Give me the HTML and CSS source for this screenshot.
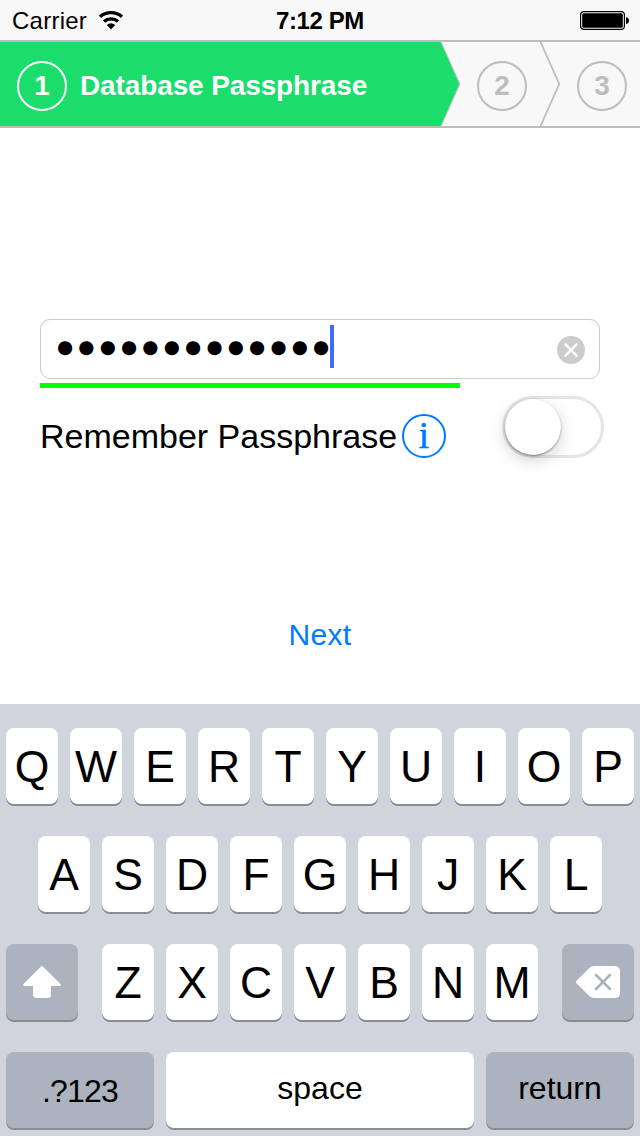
FILE: index.html
```html
<!DOCTYPE html>
<html lang="en">
<head>
<meta charset="utf-8">
<title>Database Passphrase</title>
<link rel="stylesheet" href="styles.css">
</head>
<body>
<div class="screen">
  <header class="status">
    <div class="carrier"><span>Carrier</span>
      <svg class="wifi" width="26" height="20" viewBox="0 0 26 20"><g fill="none" stroke="#000" stroke-width="3.4"><path d="M2 6.8C8 1.2 18 1.2 24 6.8"/><path d="M6 11.6C10 8 16 8 20 11.6"/></g><path d="M8.8 15Q13 11.6 17.2 15L13 19.4Z"/></svg>
    </div>
    <div class="time">7:12 PM</div>
    <div class="power"><svg width="50" height="20" viewBox="0 0 50 20"><rect x=".6" y=".6" width="43.8" height="17.8" rx="3.4" fill="#fff" stroke="#000" stroke-width="1.2"/><rect x="2.2" y="2.2" width="40.6" height="14.6" rx="1.6"/><path d="M46 6Q49 6.5 49 9.5Q49 12.5 46 13Z"/></svg></div>
  </header>
  <nav class="steps">
    <div class="step active"><span class="num">1</span><span class="title">Database Passphrase</span></div>
    <svg class="chevron" width="20" height="84" viewBox="0 0 20 84"><path d="M0 0H1L20 42L1 84H0Z" fill="#1add6c"/><path d="M1 0L19.6 42L1 84" fill="none" stroke="#bdbdbd" stroke-width="1"/></svg>
    <div class="step"><span class="num">2</span></div>
    <svg class="chevron" width="20" height="84" viewBox="0 0 20 84"><path d="M.5 0L19.2 42L.5 84" fill="none" stroke="#bdbdbd" stroke-width="1.8"/></svg>
    <div class="step"><span class="num">3</span></div>
  </nav>
  <main class="form">
    <div class="field"><span class="secret">●●●●●●●●●●●●●</span><span class="caret"></span>
      <svg class="clear" width="28" height="28" viewBox="0 0 28 28"><circle cx="14" cy="14" r="14" fill="#ccc"/><path d="M7.7 7.7L20.3 20.3M20.3 7.7L7.7 20.3" stroke="#fff" stroke-width="2.4"/></svg>
    </div>
    <div class="strength"></div>
    <div class="remember"><span class="label">Remember Passphrase</span><span class="info">i</span><span class="switch"><span class="knob"></span></span></div>
    <div class="next">Next</div>
  </main>
  <section class="keyboard">
    <div class="row"><span class="key">Q</span><span class="key">W</span><span class="key">E</span><span class="key">R</span><span class="key">T</span><span class="key">Y</span><span class="key">U</span><span class="key">I</span><span class="key">O</span><span class="key">P</span></div>
    <div class="row"><span class="key">A</span><span class="key">S</span><span class="key">D</span><span class="key">F</span><span class="key">G</span><span class="key">H</span><span class="key">J</span><span class="key">K</span><span class="key">L</span></div>
    <div class="row">
      <span class="key dark shift"><svg width="38" height="32" viewBox="0 0 38 32"><path d="M18 .6Q19 -.3 20 .6L37.3 17.8Q38.6 20 36.5 20H28V28.5Q28 32 24.5 32H13.5Q10 32 10 28.5V20H1.5Q-.6 20 .7 17.8Z" fill="#fff"/></svg></span>
      <span class="key">Z</span><span class="key">X</span><span class="key">C</span><span class="key">V</span><span class="key">B</span><span class="key">N</span><span class="key">M</span>
      <span class="key dark delete"><svg width="44" height="32" viewBox="0 0 44 32"><path d="M.5 14.8L13 2.2Q15.2 0 18 0H38.5Q44 0 44 5.5V26.5Q44 32 38.5 32H18Q15.2 32 13 29.8L.5 17.2Q-.5 16 .5 14.8Z" fill="#fff"/><path d="M20 9L34 23M34 9L20 23" stroke="#acb2be" stroke-width="2.6" stroke-linecap="round"/></svg></span>
    </div>
    <div class="row"><span class="key dark word numbers">.?123</span><span class="key word space">space</span><span class="key dark word">return</span></div>
  </section>
</div>
</body>
</html>
```
FILE: styles.css
```css
* { box-sizing: border-box; }
body { margin: 0; font-family: "Liberation Sans", Arial, sans-serif; color: #000; background: #fff; }
svg { display: block; flex: none; }
.screen { width: 640px; height: 1136px; display: flex; flex-direction: column; overflow: hidden; }

.status { height: 40px; display: grid; grid-template-columns: 1fr auto 1fr; align-items: center; padding: 1px 10px 0 12px; background: #f8f8f8; font-size: 24px; line-height: 39px; }
.carrier { display: flex; align-items: center; gap: 11px; letter-spacing: .25px; }
.wifi { margin-top: -1px; }
.time { font-weight: bold; letter-spacing: -.4px; margin-left: -2px; }
.power { display: flex; justify-content: flex-end; }

.steps { height: 88px; display: flex; background: #f8f8f8; border: solid #bdbdbd; border-width: 2px 0; }
.step { display: flex; align-items: center; width: 80px; padding: 4px 0 0 17px; color: #bdbdbd; font-size: 28px; font-weight: bold; }
.step.active { width: 440px; gap: 13px; background: #1add6c; color: #fff; }
.num { flex: none; width: 50px; height: 50px; border: 2px solid currentColor; border-radius: 50%; text-align: center; line-height: 45px; }
.title { letter-spacing: -.12px; line-height: 32px; }

.form { height: 576px; padding: 191px 40px 0; }
.field { display: flex; align-items: center; height: 60px; padding: 0 14px 0 16px; border: 1px solid #ccc; border-radius: 10px; }
.secret { font-family: "DejaVu Sans", sans-serif; font-size: 18.5px; line-height: 40px; letter-spacing: 5.2px; width: 273px; white-space: nowrap; margin-top: -5px; }
.caret { width: 4px; height: 43px; background: #426bf2; margin-top: -5px; }
.clear { margin: 2px 0 0 auto; }
.strength { width: 420px; height: 5px; margin-top: 4px; background: #0f0; }
.remember { display: flex; margin: 8px -4px 0 0; height: 62px; }
.label { width: 362px; font-size: 34px; line-height: 80px; white-space: nowrap; }
.info { width: 44px; height: 44px; margin-top: 18px; border: 2px solid #007aff; border-radius: 50%; color: #007aff; font: 37px/40px "Liberation Serif", serif; text-align: center; -webkit-text-stroke: .6px #007aff; }
.switch { width: 102px; height: 62px; margin-left: auto; border: 3px solid #e5e5e5; border-radius: 31px; }
.knob { display: block; width: 56px; height: 56px; border-radius: 50%; background: #fff; box-shadow: 0 1px 2px rgba(0,0,0,.4), 0 5px 16px rgba(0,0,0,.18); }
.next { margin-top: 159px; text-align: center; font-size: 30px; line-height: 36px; letter-spacing: .3px; color: #007aff; }

.keyboard { flex: 1; padding: 24px 6px 0; background: #d1d4dc; display: flex; flex-direction: column; gap: 32px; }
.row { display: flex; justify-content: center; gap: 12px; }
.key { width: 52px; height: 76px; display: flex; align-items: center; justify-content: center; background: #fff; border-radius: 8px; box-shadow: 0 2px 0 #898c90; font-size: 44.5px; line-height: 76px; padding-top: 2px; }
.dark { width: 72px; background: #acb2be; }
.shift { margin-right: 12px; padding-top: 0; }
.delete { margin-left: 12px; padding-top: 0; }
.word { width: 148px; font-size: 32px; padding: 0 0 4px; }
.space { width: 308px; }
.numbers { padding: 2px 0 0; letter-spacing: -.8px; }
```
